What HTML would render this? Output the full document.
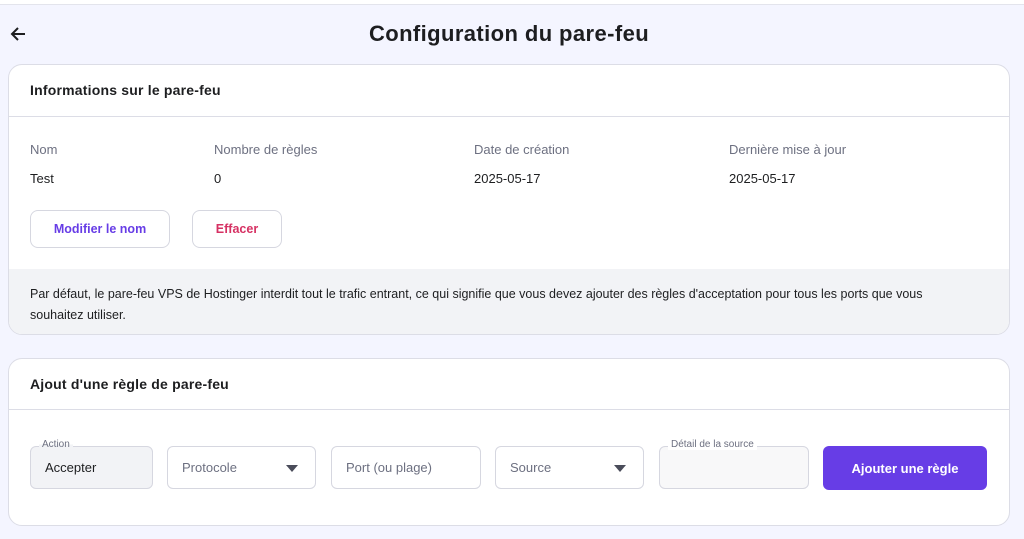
<!DOCTYPE html>
<html><head><style>
*{box-sizing:border-box;margin:0;padding:0}
body{width:1024px;height:539px;background:#f4f5ff;font-family:"Liberation Sans",sans-serif;color:#1d1e20;position:relative;overflow:hidden}
.top{position:absolute;left:0;top:0;width:1024px;height:5px;background:#fff;border-bottom:1px solid #e3e4ec}
.abs{position:absolute}
.card{position:absolute;left:8px;width:1002px;background:#fff;border:1px solid #dcdde6;border-radius:14px;overflow:hidden}
.h{font-weight:bold;font-size:14px;position:absolute;left:21px;letter-spacing:0.2px}
.line{position:absolute;left:0;right:0;height:1px;background:#dcdde6}
.lab{font-size:13px;color:#6d7081}
.val{font-size:13px;color:#1d1e20}
.btn{position:absolute;height:38px;border:1px solid #d6d7e0;border-radius:8px;background:#fff;font-weight:bold;font-size:12.5px;display:flex;align-items:center;justify-content:center}
.inp{position:absolute;top:446px;height:43px;border:1px solid #d6d7e0;border-radius:6px;background:#fff;font-size:13px;color:#6d7081;padding-left:14px;display:flex;align-items:center}
.tri{position:absolute;right:17px;top:18px;width:0;height:0;border-left:6px solid transparent;border-right:6px solid transparent;border-top:7px solid #4a4c5a}
.leg{position:absolute;top:-8px;left:8px;background:#fff;font-size:10px;padding:0 3px;color:#6d7081}
</style></head><body>
<div class="top"></div>
<svg class="abs" style="left:10px;top:26px" width="16" height="16" viewBox="0 0 16 16"><path d="M15 8H2M8 2L2 8l6 6" stroke="#1d1e20" stroke-width="2" fill="none"/></svg>
<div class="abs" style="left:0;width:1018px;top:21px;text-align:center;font-size:22px;font-weight:bold;letter-spacing:0.4px">Configuration du pare-feu</div>

<div class="card" style="top:64px;height:271px">
<div class="h" style="top:17px">Informations sur le pare-feu</div>
<div class="line" style="top:51px"></div>
<div class="abs lab" style="left:21px;top:77px">Nom</div>
<div class="abs lab" style="left:205px;top:77px">Nombre de règles</div>
<div class="abs lab" style="left:465px;top:77px">Date de création</div>
<div class="abs lab" style="left:720px;top:77px">Dernière mise à jour</div>
<div class="abs val" style="left:21px;top:106px">Test</div>
<div class="abs val" style="left:205px;top:106px">0</div>
<div class="abs val" style="left:465px;top:106px">2025-05-17</div>
<div class="abs val" style="left:720px;top:106px">2025-05-17</div>
<div class="btn" style="left:21px;top:145px;width:140px;color:#673de6">Modifier le nom</div>
<div class="btn" style="left:183px;top:145px;width:90px;color:#d63163">Effacer</div>
<div class="abs" style="left:0;right:0;top:204px;bottom:0;background:#f2f3f6;padding:15px 21px;font-size:12.5px;line-height:21px"><div style="width:960px">Par défaut, le pare-feu VPS de Hostinger interdit tout le trafic entrant, ce qui signifie que vous devez ajouter des règles d'acceptation pour tous les ports que vous<br>souhaitez utiliser.</div></div>
</div>

<div class="card" style="top:358px;height:168px">
<div class="h" style="top:17px">Ajout d'une règle de pare-feu</div>
<div class="line" style="top:50px"></div>
</div>
<div class="inp" style="left:30px;width:123px;background:#f2f3f6;color:#1d1e20"><span class="leg" style="background:linear-gradient(#fff 50%,#f2f3f6 50%)">Action</span>Accepter</div>
<div class="inp" style="left:167px;width:149px">Protocole<span class="tri"></span></div>
<div class="inp" style="left:331px;width:150px">Port (ou plage)</div>
<div class="inp" style="left:495px;width:149px">Source<span class="tri"></span></div>
<div class="inp" style="left:659px;width:150px;background:#f8f8f9"><span class="leg">Détail de la source</span></div>
<div class="abs" style="left:823px;top:446px;width:164px;height:44px;background:#673de6;border-radius:6px;color:#fff;font-weight:bold;font-size:13px;display:flex;align-items:center;justify-content:center">Ajouter une règle</div>
</body></html>
